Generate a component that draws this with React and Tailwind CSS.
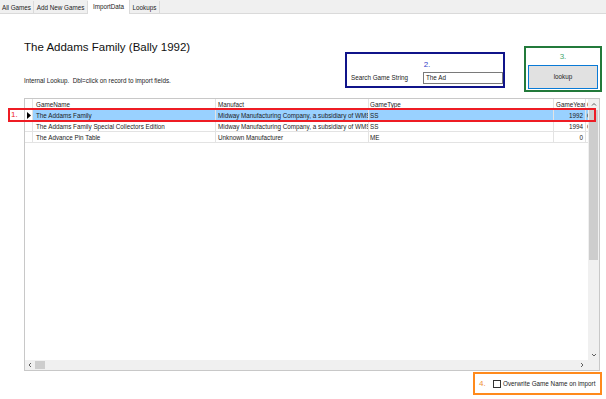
const TABS = [
  { label: 'All Games', w: 'w-[34px]' },
  { label: 'Add New Games', w: 'w-[54px]' },
  { label: 'ImportData', w: 'w-[42px]', active: true },
  { label: 'Lookups', w: 'w-[30px]' },
];

const ROWS = [
  {
    name: 'The Addams Family',
    manu: 'Midway Manufacturing Company, a subsidiary of WMS Industries',
    type: 'SS',
    year: '1992',
    extra: 'C',
    selected: true,
  },
  {
    name: 'The Addams Family Special Collectors Edition',
    manu: 'Midway Manufacturing Company, a subsidiary of WMS Industries',
    type: 'SS',
    year: '1994',
    extra: 'C',
  },
  {
    name: 'The Advance Pin Table',
    manu: 'Unknown Manufacturer',
    type: 'ME',
    year: '0',
    extra: '',
  },
];

const font = { fontFamily: '"Liberation Sans", Arial, sans-serif' };

function Cell({ className = '', children }) {
  return (
    <div className={`h-full overflow-hidden whitespace-nowrap border-r border-[#e3e3e3] leading-[11px] ${className}`}>
      {children}
    </div>
  );
}

export default function App() {
  return (
    <div className="w-[606px] h-[399px] bg-white text-[#1b1b1b] overflow-hidden" style={font}>
      {/* tabs */}
      <div className="flex h-[14px] bg-[#f0f0f0] border-b border-[#dadada]">
        {TABS.map((t) => (
          <div
            key={t.label}
            className={`${t.w} flex items-center justify-center text-[6.3px] border-r border-[#dadada] ${
              t.active ? 'bg-white h-[15px] -mt-[1px]' : 'h-[13px] mt-[1px]'
            }`}
          >
            {t.label}
          </div>
        ))}
      </div>

      {/* header area */}
      <div className="flex h-[84px]">
        <div className="w-[345px] pl-[24px] flex flex-col">
          <div className="mt-[25px] text-[11.5px] leading-[16px] text-[#111]">The Addams Family (Bally 1992)</div>
          <div className="mt-[22px] text-[6.3px] leading-[8px]">Internal Lookup.&nbsp; Dbl=click on record to import fields.</div>
        </div>

        <div className="mt-[38px] w-[160px] h-[36px] border-2 border-[#10148a] flex flex-col">
          <div className="text-center text-[8px] leading-[10px] mt-[6px] pl-[4px] text-[#3540c8]">2.</div>
          <div className="flex items-center mt-[2px] pl-[4px]">
            <span className="text-[6.3px] w-[72px]">Search Game String</span>
            <div className="w-[80px] h-[12px] border border-[#7a7a7a] bg-white text-[6.3px] leading-[10px] pl-[2px]">The Ad</div>
          </div>
        </div>

        <div className="ml-[19px] mt-[32px] w-[78px] h-[46px] border-2 border-[#237a3b] flex flex-col items-center">
          <div className="text-[8px] leading-[10px] mt-[4px] text-[#45a870]">3.</div>
          <button className="mt-[3px] w-[70px] h-[24px] bg-[#e1e1e1] border border-[#0a7ad6] text-[6.3px]">lookup</button>
        </div>
      </div>

      {/* grid */}
      <div className="relative ml-[24px] w-[576px] h-[273px] border border-[#c8c8c8] flex flex-col">
        <div className="flex flex-1 min-h-0">
          <div className="flex-1 flex flex-col text-[6.3px]">
            <div className="flex h-[11px] text-[#222] border-b border-[#e3e3e3]">
              <Cell className="w-[8px]" />
              <Cell className="w-[183px] pl-[3px]">GameName</Cell>
              <Cell className="w-[153px] pl-[2px]">Manufact</Cell>
              <Cell className="w-[185px] pl-[1px]">GameType</Cell>
              <Cell className="w-[32px] pl-[2px]">GameYear</Cell>
              <Cell className="w-[2px] pl-[1px] border-r-0">C</Cell>
            </div>
            {ROWS.map((r) => (
              <div key={r.name} className={`flex h-[11px] border-b border-[#e3e3e3] ${r.selected ? 'bg-[#99d1ff]' : ''}`}>
                <div className="w-[8px] h-full bg-white border-r border-[#e3e3e3] flex items-center justify-center">
                  {r.selected && (
                    <svg width="4" height="7" viewBox="0 0 4 7">
                      <path d="M0 0 L4 3.5 L0 7 Z" fill="#000" />
                    </svg>
                  )}
                </div>
                <Cell className="w-[183px] pl-[3px]">{r.name}</Cell>
                <Cell className="w-[153px] pl-[2px]">{r.manu}</Cell>
                <Cell className="w-[185px] pl-[1px]">{r.type}</Cell>
                <Cell className="w-[32px] pr-[2px] text-right">{r.year}</Cell>
                <Cell className="w-[2px] pl-[1px] border-r-0">{r.extra}</Cell>
              </div>
            ))}
          </div>
          {/* vertical scrollbar */}
          <div className="w-[12px] bg-[#f0f0f0] flex flex-col items-center">
            <svg width="6" height="11" viewBox="0 0 6 11">
              <path d="M1 6.5 L3 4.5 L5 6.5" stroke="#606060" strokeWidth="1" fill="none" />
            </svg>
            <div className="w-[9px] h-[150px] bg-[#cdcdcd]" />
            <div className="flex-1" />
            <svg width="6" height="10" viewBox="0 0 6 10">
              <path d="M1 4 L3 6 L5 4" stroke="#606060" strokeWidth="1" fill="none" />
            </svg>
          </div>
        </div>
        {/* horizontal scrollbar */}
        <div className="flex h-[10px]">
          <div className="flex-1 bg-[#f0f0f0] flex items-center">
            <svg width="10" height="10" viewBox="0 0 10 10">
              <path d="M6 3 L4 5 L6 7" stroke="#606060" strokeWidth="1" fill="none" />
            </svg>
            <div className="w-[10px] h-[8px] bg-[#cdcdcd]" />
            <div className="flex-1" />
            <svg width="10" height="10" viewBox="0 0 10 10">
              <path d="M4 3 L6 5 L4 7" stroke="#606060" strokeWidth="1" fill="none" />
            </svg>
          </div>
          <div className="w-[12px] bg-[#f0f0f0]" />
        </div>

        {/* annotation 1 */}
        <div className="absolute left-[-17px] top-[9px] w-[588px] h-[14px] border-2 border-[#ee1c24] pointer-events-none">
          <span className="absolute left-[1px] top-[0px] text-[8px] leading-[10px] text-[#ee1c24]">1.</span>
        </div>
      </div>

      {/* bottom */}
      <div className="flex justify-end pr-[4px] mt-[1px]">
        <div className="w-[129px] h-[23px] border-2 border-[#ff8a1c] flex items-center pl-[4px]">
          <span className="text-[8px] text-[#f0913a] w-[14px]">4.</span>
          <span className="w-[8px] h-[8px] border border-[#333] bg-white mr-[2px]" />
          <span className="text-[6.3px] whitespace-nowrap">Overwrite Game Name on import</span>
        </div>
      </div>
    </div>
  );
}
